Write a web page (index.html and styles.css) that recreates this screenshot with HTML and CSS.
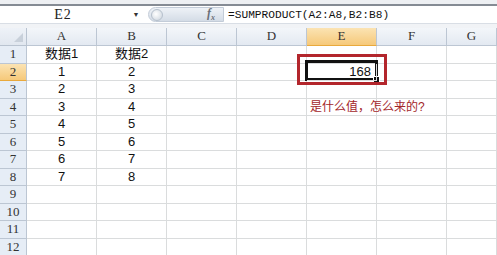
FILE: index.html
```html
<!DOCTYPE html>
<html lang="zh-CN">
<head>
    <meta charset="UTF-8">
    <title>SUMPRODUCT</title>
    <link rel="stylesheet" href="styles.css">
</head>
<body>

<div class="topline"></div>

<div class="formula-bar">
    <div class="name-box">E2</div>
    <div class="name-arrow">&#9660;</div>
    <div class="fx-pill">
        <span class="pill-knob"></span>
        <span class="fx">f<sub>x</sub></span>
    </div>
    <div class="formula">=SUMPRODUCT(A2:A8,B2:B8)</div>
</div>

<div class="gap"></div>

<div class="sheet">
    <div class="grid" id="grid"></div>
    <div class="sel-box"><span class="handle"></span></div>
    <div class="mark-box"></div>
</div>

<script>
    const cols = ['A', 'B', 'C', 'D', 'E', 'F', 'G'];
    const data = {
        'A1': '数据1', 'B1': '数据2',
        'A2': '1', 'B2': '2', 'A3': '2', 'B3': '3', 'A4': '3', 'B4': '4',
        'A5': '4', 'B5': '5', 'A6': '5', 'B6': '6', 'A7': '6', 'B7': '7',
        'A8': '7', 'B8': '8', 'E2': '168', 'E4': '是什么值，怎么来的?'
    };

    const grid = document.getElementById('grid');

    function cell(cls, text) {
        const d = document.createElement('div');
        d.className = cls;
        if (text) d.textContent = text;
        grid.appendChild(d);
    }

    // header row
    cell('corner');
    cols.forEach(c => cell(c === 'E' ? 'col-head active' : 'col-head', c));

    // rows
    for (let r = 1; r <= 12; r++) {
        cell(r === 2 ? 'row-head active' : 'row-head', String(r));
        cols.forEach(c => {
            const key = c + r;
            let cls = 'cell';
            if (key === 'E2') cls += ' right';
            else if (key === 'E4') cls += ' note';
            else if (c === 'A' || c === 'B') cls += ' center';
            cell(cls, data[key]);
        });
    }
</script>

</body>
</html>
```

FILE: styles.css
```css
body {
    margin: 0;
    width: 497px;
    height: 255px;
    overflow: hidden;
    background: #fff;
    font-family: "Liberation Serif", "Noto Sans CJK SC", serif;
    color: #222;
}

.topline {
    height: 4px;
    background: #eef0f3;
    border-bottom: 2px solid #858b94;
}

.formula-bar {
    display: flex;
    align-items: center;
    height: 17px;
    background: #fff;
}

.name-box {
    width: 126px;
    text-align: center;
    font-size: 14px;
    letter-spacing: 1px;
}

.name-arrow {
    width: 20px;
    font-size: 7px;
    color: #333;
    text-align: center;
}

.fx-pill {
    display: flex;
    align-items: center;
    justify-content: space-between;
    width: 76px;
    height: 15px;
    margin-left: 2px;
    padding: 0 8px 0 2px;
    box-sizing: border-box;
    border-radius: 8px 0 0 8px;
    background: linear-gradient(#eef2f7, #d4dce6);
    border: 1px solid #c3ccd8;
}

.pill-knob {
    width: 10px;
    height: 10px;
    border-radius: 50%;
    background: radial-gradient(circle at 40% 40%, #fff, #c9d2dc);
    border: 1px solid #b6c0cc;
}

.fx {
    font-style: italic;
    font-weight: bold;
    font-size: 12px;
    color: #6a6f78;
}

.fx sub {
    font-size: 8px;
}

.formula {
    margin-left: 4px;
    font-family: "Liberation Mono", monospace;
    font-size: 11.2px;
    color: #111;
    padding-top: 1px;
}

.gap {
    height: 5px;
    background: #f1f3f6;
    border-top: 1px solid #d9dee5;
    box-sizing: border-box;
}

.sheet {
    position: relative;
}

.grid {
    display: grid;
    grid-template-columns: 27px repeat(6, 70px) 1fr;
    grid-template-rows: 18px repeat(12, 17.5px);
}

.grid > div {
    box-sizing: border-box;
    border-right: 1px solid #dadcdd;
    border-bottom: 1px solid #dadcdd;
    white-space: nowrap;
    overflow: visible;
    line-height: 16px;
}

.corner {
    background: linear-gradient(#eef2f8, #e1e7ef);
    position: relative;
    border-color: #b9c3d0 !important;
}

.corner::after {
    content: "";
    position: absolute;
    right: 3px;
    bottom: 3px;
    border-left: 9px solid transparent;
    border-bottom: 9px solid #c8d0da;
}

.col-head {
    text-align: center;
    font-size: 13px;
    color: #333;
    background: linear-gradient(#f3f6fa, #e3e9f1);
    border-color: #bcc6d3 !important;
}

.row-head {
    text-align: center;
    font-size: 13px;
    color: #333;
    background: #e6edf6;
    border-color: #bcc6d3 !important;
}

.active {
    background: linear-gradient(#fbe3b3, #f6c97a);
    border-bottom-color: #e9a93c !important;
}

.cell {
    font-family: "Liberation Sans", "Noto Sans CJK SC", sans-serif;
    font-size: 13px;
    color: #111;
    padding: 0 3px;
}

.center {
    text-align: center;
}

.right {
    text-align: right;
    padding-right: 5px;
    position: relative;
    z-index: 2;
}

.note {
    font-size: 12px;
    color: #a3262a;
    position: relative;
    z-index: 2;
}

.sel-box {
    position: absolute;
    left: 305px;
    top: 32px;
    width: 73px;
    height: 21px;
    box-sizing: border-box;
    border: 3px solid #111;
}

.handle {
    position: absolute;
    right: -5px;
    bottom: -5px;
    width: 5px;
    height: 5px;
    background: #111;
    border: 1px solid #fff;
}

.mark-box {
    position: absolute;
    left: 297px;
    top: 26px;
    width: 90px;
    height: 31px;
    box-sizing: border-box;
    border: 3px solid #b3262c;
}
```
